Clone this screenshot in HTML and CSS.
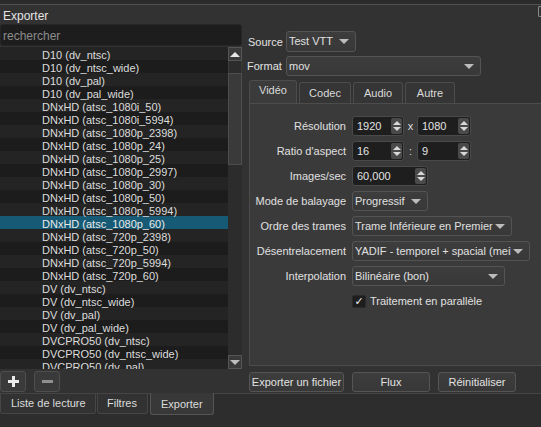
FILE: index.html
```html
<!DOCTYPE html>
<html lang="fr">
<head>
  <meta charset="UTF-8">
  <title>Exporter</title>
  <link rel="stylesheet" href="styles.css">
</head>
<body>
  <div class="dock">
    <div class="titlebar">
      <span class="title">Exporter</span>
      <span class="float-btn"></span>
    </div>

    <div class="main">
      <!-- colonne gauche : liste des presets -->
      <div class="left">
        <div class="search">rechercher</div>
        <div class="list-wrap">
          <ul class="list">
            <li>D10 (dv_ntsc)</li>
            <li>D10 (dv_ntsc_wide)</li>
            <li>D10 (dv_pal)</li>
            <li>D10 (dv_pal_wide)</li>
            <li>DNxHD (atsc_1080i_50)</li>
            <li>DNxHD (atsc_1080i_5994)</li>
            <li>DNxHD (atsc_1080p_2398)</li>
            <li>DNxHD (atsc_1080p_24)</li>
            <li>DNxHD (atsc_1080p_25)</li>
            <li>DNxHD (atsc_1080p_2997)</li>
            <li>DNxHD (atsc_1080p_30)</li>
            <li>DNxHD (atsc_1080p_50)</li>
            <li>DNxHD (atsc_1080p_5994)</li>
            <li class="selected">DNxHD (atsc_1080p_60)</li>
            <li>DNxHD (atsc_720p_2398)</li>
            <li>DNxHD (atsc_720p_50)</li>
            <li>DNxHD (atsc_720p_5994)</li>
            <li>DNxHD (atsc_720p_60)</li>
            <li>DV (dv_ntsc)</li>
            <li>DV (dv_ntsc_wide)</li>
            <li>DV (dv_pal)</li>
            <li>DV (dv_pal_wide)</li>
            <li>DVCPRO50 (dv_ntsc)</li>
            <li>DVCPRO50 (dv_ntsc_wide)</li>
            <li>DVCPRO50 (dv_pal)</li>
          </ul>
          <div class="vscroll">
            <div class="sb-btn"><span class="tri-up"></span></div>
            <div class="sb-gap"></div>
            <div class="sb-handle"></div>
            <div class="sb-track"></div>
            <div class="sb-btn"><span class="tri-down"></span></div>
          </div>
        </div>
        <div class="list-tools">
          <button class="tool"><span class="plus"></span></button>
          <button class="tool"><span class="minus"></span></button>
        </div>
      </div>

      <!-- colonne droite : réglages -->
      <div class="right">
        <div class="top-row">
          <span class="lbl">Source</span>
          <div class="combo source">Test VTT<span class="arrow"></span></div>
        </div>
        <div class="top-row">
          <span class="lbl">Format</span>
          <div class="combo format">mov<span class="arrow"></span></div>
        </div>

        <div class="tabs">
          <span class="tab active">Vidéo</span>
          <span class="tab">Codec</span>
          <span class="tab">Audio</span>
          <span class="tab">Autre</span>
        </div>
        <div class="pane">
          <div class="frow">
            <span class="flbl">Résolution</span>
            <div class="spin w52">1920<span class="spin-btns"><i class="tri-up"></i><i class="tri-down"></i></span></div>
            <span class="sep">x</span>
            <div class="spin w54">1080<span class="spin-btns"><i class="tri-up"></i><i class="tri-down"></i></span></div>
          </div>
          <div class="frow">
            <span class="flbl">Ratio d'aspect</span>
            <div class="spin w52">16<span class="spin-btns"><i class="tri-up"></i><i class="tri-down"></i></span></div>
            <span class="sep">:</span>
            <div class="spin w54">9<span class="spin-btns"><i class="tri-up"></i><i class="tri-down"></i></span></div>
          </div>
          <div class="frow">
            <span class="flbl">Images/sec</span>
            <div class="spin w76">60,000<span class="spin-btns"><i class="tri-up"></i><i class="tri-down"></i></span></div>
          </div>
          <div class="frow">
            <span class="flbl">Mode de balayage</span>
            <div class="combo w76">Progressif<span class="arrow"></span></div>
          </div>
          <div class="frow">
            <span class="flbl">Ordre des trames</span>
            <div class="combo w160">Trame Inférieure en Premier<span class="arrow"></span></div>
          </div>
          <div class="frow">
            <span class="flbl">Désentrelacement</span>
            <div class="combo w178"><span class="clip">YADIF - temporel + spacial (meil</span><span class="arrow"></span></div>
          </div>
          <div class="frow">
            <span class="flbl">Interpolation</span>
            <div class="combo w153">Bilinéaire (bon)<span class="arrow"></span></div>
          </div>
          <div class="frow check-row">
            <span class="flbl"></span>
            <span class="checkbox">✓</span>
            <span class="check-lbl">Traitement en parallèle</span>
          </div>
        </div>

        <div class="actions">
          <button class="btn w95">Exporter un fichier</button>
          <button class="btn">Flux</button>
          <button class="btn">Réinitialiser</button>
        </div>
      </div>
    </div>

    <div class="bottom-tabs">
      <span class="btab w96">Liste de lecture</span>
      <span class="btab w51">Filtres</span>
      <span class="btab active">Exporter</span>
    </div>
  </div>
</body>
</html>
```

FILE: styles.css
```css
/* base */
* { margin:0; padding:0; box-sizing:border-box; }
html, body { width:541px; height:427px; overflow:hidden; }
body { background:#2b2b2b; font-family:"Liberation Sans", Arial, sans-serif; font-size:11px; color:#dedede; }
button { font:inherit; color:inherit; }
span, button, li { white-space:nowrap; }

.dock { display:flex; flex-direction:column; height:427px; }

/* barre de titre */
.titlebar {
  height:20px; margin-top:4px; border-top:1px solid #505050; background:#323232;
  display:flex; align-items:center; justify-content:space-between; padding:2px 0 0 3px; font-size:12px; color:#e4e4e4;
}
.float-btn { width:3px; height:11px; border:1px solid #8a8a8a; border-right:none; border-radius:2px 0 0 2px; margin-top:-8px; }

.main { display:flex; height:369px; background:#323232; }

/* gauche */
.left { width:242px; display:flex; flex-direction:column; }
.search {
  height:22px; background:#1d1d1d; border:1px solid #262626; border-radius:3px;
  padding:1px 0 0 2px; line-height:20px; color:#8c8c8c; font-size:12px;
}
.list-wrap { display:flex; height:322px; margin-top:1px; }
.list { list-style:none; width:228px; height:322px; overflow:hidden; background:#1b1b1b; }
.list li { height:13px; line-height:12px; padding:2px 0 0 42px; color:#dcdcdc; background:#242424; }
.list li:nth-child(even) { background:#1c1c1c; }
.list li.selected { background:#175a75; color:#eaeaea; }

.vscroll { width:14px; display:flex; flex-direction:column; background:#2c2c2c; }
.sb-btn {
  height:14px; border:1px solid #555; background:#3a3a3a;
  display:flex; align-items:center; justify-content:center;
}
.sb-gap { height:12px; border-left:1px solid #3c3c3c; border-right:1px solid #3c3c3c; }
.sb-handle { height:92px; background:#3a3a3a; border:1px solid #4d4d4d; }
.sb-track { flex:1; }
.tri-up { width:0; height:0; border-left:5px solid transparent; border-right:5px solid transparent; border-bottom:5px solid #e8e8e8; }
.tri-down { width:0; height:0; border-left:5px solid transparent; border-right:5px solid transparent; border-top:5px solid #bdbdbd; }

.list-tools { display:flex; gap:8px; padding-top:2px; }
.tool {
  width:26px; height:21px; border:1px solid #4e4e4e; border-radius:3px; background:#3a3a3a;
  display:flex; align-items:center; justify-content:center; position:relative;
}
.plus, .minus { display:block; width:11px; height:3px; background:#ececec; }
.minus { background:#8f8f8f; }
.plus::after { content:""; position:absolute; left:50%; top:50%; width:3px; height:11px; margin:-6px 0 0 -1px; background:#ececec; }

/* droite */
.right { flex:1; padding:7px 0 0 6px; display:flex; flex-direction:column; }
.top-row { display:flex; align-items:center; gap:2px; margin-bottom:4px; }
.lbl { width:36px; color:#e2e2e2; }
.top-row + .top-row .lbl { margin-left:-1px; width:37px; }

.combo {
  position:relative; height:20px; line-height:18px; padding:0 18px 0 2px;
  border:1px solid #545454; border-radius:3px; background:linear-gradient(#3d3d3d, #383838);
  color:#e0e0e0; overflow:hidden;
}
.combo .arrow { position:absolute; right:6px; top:7px; width:0; height:0; border-left:5px solid transparent; border-right:5px solid transparent; border-top:5px solid #bcbcbc; }
.combo.source { width:70px; height:21px; }
.combo.format { width:195px; }
.combo .clip { display:block; overflow:hidden; }

.tabs { display:flex; align-items:flex-end; gap:2px; height:23px; margin-left:1px; }
.tab {
  width:52px; height:21px; line-height:20px; text-align:center;
  border:1px solid #4c4c4c; border-bottom:none; border-radius:3px 3px 0 0; background:#353535; color:#dadada;
}
.tab.active { width:48px; height:23px; background:#3b3b3b; line-height:18px; }
.tab:nth-child(3), .tab:nth-child(4) { width:50px; }

.pane {
  height:263px; margin-left:1px; border:1px solid #4c4c4c; border-right:none; background:#3a3a3a;
  padding-top:12px; display:flex; flex-direction:column; gap:5px;
}
.frow { display:flex; align-items:center; height:20px; }
.flbl { width:97px; text-align:right; padding-right:1px; color:#e0e0e0; margin-right:5px; }
.sep { width:13px; text-align:center; }
.spin {
  position:relative; height:20px; line-height:18px; padding-left:4px; border:1px solid #4a4a4a; border-radius:3px;
  background:#1e1e1e; color:#e4e4e4;
}
.spin-btns {
  position:absolute; right:1px; top:1px; width:11px; height:16px; background:#4a4a4a; border-radius:2px;
  display:flex; flex-direction:column; align-items:center; justify-content:space-around; padding:2px 0;
}
.spin-btns .tri-up { border-left:4px solid transparent; border-right:4px solid transparent; border-bottom:4px solid #d8d8d8; }
.spin-btns .tri-down { border-left:4px solid transparent; border-right:4px solid transparent; border-top:4px solid #d8d8d8; }
.w52 { width:52px; }
.w54 { width:54px; }
.w76 { width:76px; }
.w160 { width:160px; }
.w178 { width:178px; }
.w153 { width:153px; }

.check-row { height:14px; margin-top:3px; }
.checkbox {
  width:14px; height:13px; background:#1e1e1e; border:1px solid #2a2a2a; border-radius:2px;
  font-size:11px; line-height:12px; text-align:center; color:#f0f0f0; font-family:"DejaVu Sans", sans-serif; font-weight:bold;
}
.check-lbl { margin-left:4px; color:#e0e0e0; }

.actions { display:flex; gap:8px; margin-top:6px; margin-left:1px; }
.btn {
  width:78px; height:20px; border:1px solid #555; border-radius:3px; background:linear-gradient(#3d3d3d, #383838);
  color:#e2e2e2;
}
.btn.w95 { width:95px; }

/* onglets du bas */
.bottom-tabs { height:34px; display:flex; align-items:flex-start; border-top:1px solid #444; background:#2d2d2d; gap:1px; }
.btab {
  height:20px; line-height:18px; padding:0 10px; color:#dcdcdc;
  border:1px solid #464646; border-top:none; border-radius:0 0 3px 3px; background:#323232;
}
.btab.w96 { width:96px; }
.btab.w51 { width:51px; padding-left:9px; margin-right:1px; }
.btab.active { width:64px; height:22px; margin-top:-1px; line-height:23px; background:#383838; border-color:#555; }
```
